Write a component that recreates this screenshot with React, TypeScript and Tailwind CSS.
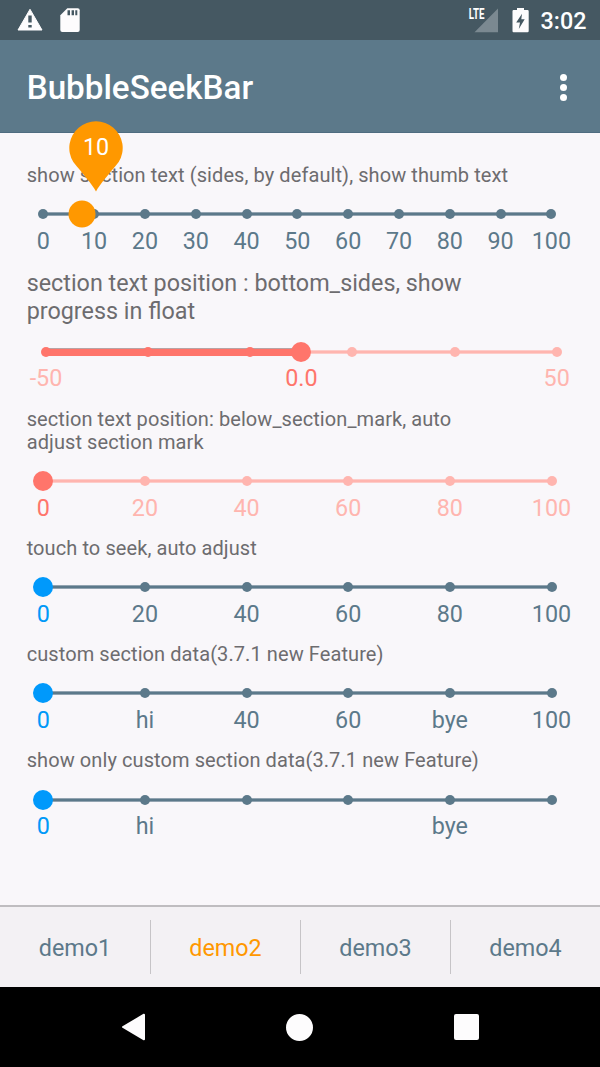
import React from "react";

type Mark = { text: string; active?: boolean };

type SeekBarProps = {
  caption: string[];
  large?: boolean;
  inset: string;
  line: string;
  dot: string;
  labelColor: string;
  activeColor: string;
  thumb: string;
  thumbAt: number;
  labels: Mark[];
  dots: number;
  progress?: React.ReactNode;
  activeDots?: number;
  activeDot?: string;
};

function SeekBar(p: SeekBarProps) {
  return (
    <section>
      <div
        className={
          p.large
            ? "pl-[26.7px] text-[23.33px] leading-[27.34px] text-[#6d6c6f]"
            : "pl-[26.7px] text-[20px] leading-[23.44px] tracking-[0.085px] text-[#6d6c6f]"
        }
      >
        {p.caption.map((c) => (
          <p key={c} className="whitespace-nowrap">
            {c}
          </p>
        ))}
      </div>
      <div className={`h-[82.65px] pt-[21.7px] ${p.inset}`}>
        <div className="relative h-[10px]">
          <svg className={`absolute inset-0 h-[10px] w-full ${p.line}`}>
            <rect x="0" y="3.35" width="100%" height="3.3" fill="currentColor" />
          </svg>
          {p.progress}
          <div className="relative flex h-full justify-between">
            {Array.from({ length: p.dots }, (_, i) => (
              <span key={i} className="flex w-0 justify-center">
                <span
                  className={`size-[10px] shrink-0 rounded-full ${
                    i < (p.activeDots ?? 0) ? p.activeDot : p.dot
                  }`}
                />
              </span>
            ))}
          </div>
          <span
            className={`absolute top-1/2 -translate-1/2 rounded-full ${p.thumb}`}
            style={{ left: `${p.thumbAt}%` }}
          />
        </div>
        <div className="mt-[8.4px] flex justify-between text-[23.33px] leading-[27.34px]">
          {p.labels.map((l, i) => (
            <span
              key={i}
              className={`flex w-0 justify-center whitespace-nowrap ${
                l.active ? p.activeColor : p.labelColor
              }`}
            >
              {l.text}
            </span>
          ))}
        </div>
      </div>
    </section>
  );
}

const marks = (texts: string[], active = -1): Mark[] =>
  texts.map((text, i) => ({ text, active: i === active }));

const slate = {
  inset: "pl-[43.3px] pr-[48.5px]",
  line: "text-[#5c798a]",
  dot: "bg-[#5c798a]",
  labelColor: "text-[#5c798a]",
};
const pink = {
  line: "text-[#ffb5af]",
  dot: "bg-[#ffb5af]",
  labelColor: "text-[#ffb5af]",
  activeColor: "text-[#ff756b]",
  thumb: "size-[20px] bg-[#ff756b]",
};
const blue = {
  activeColor: "text-[#0099f8]",
  thumb: "size-[20px] bg-[#0099fb]",
};

function StatusBar() {
  return (
    <header className="flex h-[40px] shrink-0 items-center bg-[#455862] text-white">
      <svg className="ml-[16px] h-[24px] w-[28px]" viewBox="0 0 28 24">
        <path
          d="M14 1.3 L26 22 H2 Z"
          fill="#fdfcfd"
          stroke="#fdfcfd"
          strokeWidth="1"
          strokeLinejoin="round"
        />
        <path d="M12.3 7.5h3.4v7h-3.4zM12.3 17h3.4v2.6h-3.4z" fill="#455862" />
      </svg>
      <svg className="ml-[16px] h-[24px] w-[20px]" viewBox="0 0 20 24">
        <path
          d="M7.3 0.3H17.7Q19.7 .3 19.7 2.3V22Q19.7 24 17.7 24H2.3Q.3 24 .3 22V7.3Z"
          fill="#fdfcfd"
        />
        <path d="M7.5 2.3h2.5v5H7.5zM11.6 2.3h2.4v5h-2.4zM15.3 2.3h2v5h-2z" fill="#455862" />
      </svg>
      <div className="ml-auto flex items-center">
        <svg className="h-[40px] w-[36px]" viewBox="0 0 36 40">
          <path d="M35 8.5V32.3H11.500Z" fill="#7b8991" />
          <text
            x="5.7"
            y="19"
            fontSize="15"
            fontWeight="700"
            fill="#fff"
            textLength="15.7"
            lengthAdjust="spacingAndGlyphs"
            fontFamily="Roboto, sans-serif"
          >
            LTE
          </text>
        </svg>
        <svg className="ml-[12.3px] h-[26px] w-[17px]" viewBox="0 0 17 26">
          <path
            d="M5 1H12V3.1H15.5Q16.7 3.1 16.7 4.3V24Q16.7 25.2 15.5 25.2H1.5Q.5 25.2 .5 24V4.3Q.5 3.1 1.5 3.1H5Z"
            fill="#fdfcfd"
          />
          <path d="M10 6.7 L4.2 15.5H8L6.8 22L12.700 12.2H9.3Z" fill="#455862" />
        </svg>
        <span className="mr-[13.5px] ml-[12px] pt-px text-[23.33px] leading-[40px] font-medium">
          3:02
        </span>
      </div>
    </header>
  );
}

export default function App() {
  return (
    <div className="flex h-[1067px] w-[600px] flex-col overflow-hidden bg-[#f9f7fa] font-['Roboto',sans-serif]">
      <StatusBar />
      <div className="flex h-[93.3px] shrink-0 items-center justify-between border-b border-[#4f6c80] bg-[#5c798a] pr-[33.5px] pl-[26.7px]">
        <h1 className="pt-[4px] text-[33.2px] leading-[40px] font-medium text-white">
          BubbleSeekBar
        </h1>
        <div className="flex flex-col gap-[3px] pt-[2px]">
          <i className="size-[7px] rounded-full bg-white" />
          <i className="size-[7px] rounded-full bg-white" />
          <i className="size-[7px] rounded-full bg-white" />
        </div>
      </div>

      <main className="relative flex-1 pt-[31px]">
        <SeekBar
          {...slate}
          caption={["show section text (sides, by default), show thumb text"]}
          activeColor=""
          thumb="size-[27px] bg-[#ff9800]"
          thumbAt={7.58}
          dots={11}
          labels={marks(["0", "10", "20", "30", "40", "50", "60", "70", "80", "90", "100"])}
        />
        <SeekBar
          {...pink}
          inset="pl-[46px] pr-[43.3px]"
          large
          caption={["section text position : bottom_sides, show", "progress in float"]}
          thumbAt={50}
          dots={6}
          activeDots={3}
          activeDot="bg-[#ff756b]"
          progress={
            <div className="absolute top-[1px] left-0 h-[8px] w-1/2 border-t border-[#b8a3a4] bg-[#ff756b]" />
          }
          labels={marks(["-50", "0.0", "50"], 1)}
        />
        <SeekBar
          {...pink}
          inset="pl-[43.3px] pr-[48.5px]"
          caption={["section text position: below_section_mark, auto", "adjust section mark"]}
          thumbAt={0}
          dots={6}
          labels={marks(["0", "20", "40", "60", "80", "100"], 0)}
        />
        <SeekBar
          {...slate}
          {...blue}
          caption={["touch to seek, auto adjust"]}
          thumbAt={0}
          dots={6}
          labels={marks(["0", "20", "40", "60", "80", "100"], 0)}
        />
        <SeekBar
          {...slate}
          {...blue}
          caption={["custom section data(3.7.1 new Feature)"]}
          thumbAt={0}
          dots={6}
          labels={marks(["0", "hi", "40", "60", "bye", "100"], 0)}
        />
        <SeekBar
          {...slate}
          {...blue}
          caption={["show only custom section data(3.7.1 new Feature)"]}
          thumbAt={0}
          dots={6}
          labels={marks(["0", "hi", "", "", "bye", ""], 0)}
        />

        <div className="absolute top-[-12.6px] left-[69px] h-[71px] w-[54px]">
          <svg className="absolute inset-0 h-full w-full" viewBox="0 0 54 71">
            <path
              d="M27 70.5 C23 63 14 53 4.3 41 A26.7 26.7 0 1 1 49.7 41 C40 53 31 63 27 70.5Z"
              fill="#ff9800"
            />
          </svg>
          <span className="relative block pt-[13px] text-center text-[23.33px] leading-[27.34px] text-white">
            10
          </span>
        </div>
      </main>

      <nav className="flex h-[82px] shrink-0 items-center border-t-2 border-[#bfbdc0] bg-[#f3f1f4] text-[23.33px] text-[#5c798a]">
        {["demo1", "demo2", "demo3", "demo4"].map((d, i) => (
          <div
            key={d}
            className={`flex h-[54px] w-[150px] items-center justify-center pt-[2px] ${
              i > 0 ? "border-l border-[#c6c4c7]" : ""
            } ${i === 1 ? "text-[#ff9800]" : ""}`}
          >
            {d}
          </div>
        ))}
      </nav>

      <footer className="flex h-[80px] shrink-0 items-center bg-black">
        <svg className="ml-[121px] h-[28px] w-[25px]" viewBox="0 0 25 28">
          <path
            d="M23 1.7V26.3L2 14Z"
            fill="#fdfcfd"
            stroke="#fdfcfd"
            strokeWidth="2"
            strokeLinejoin="round"
          />
        </svg>
        <span className="ml-[140.4px] size-[27px] rounded-full bg-[#fdfcfd]" />
        <span className="ml-[140.5px] size-[25.5px] rounded-[2px] bg-[#fdfcfd]" />
      </footer>
    </div>
  );
}
